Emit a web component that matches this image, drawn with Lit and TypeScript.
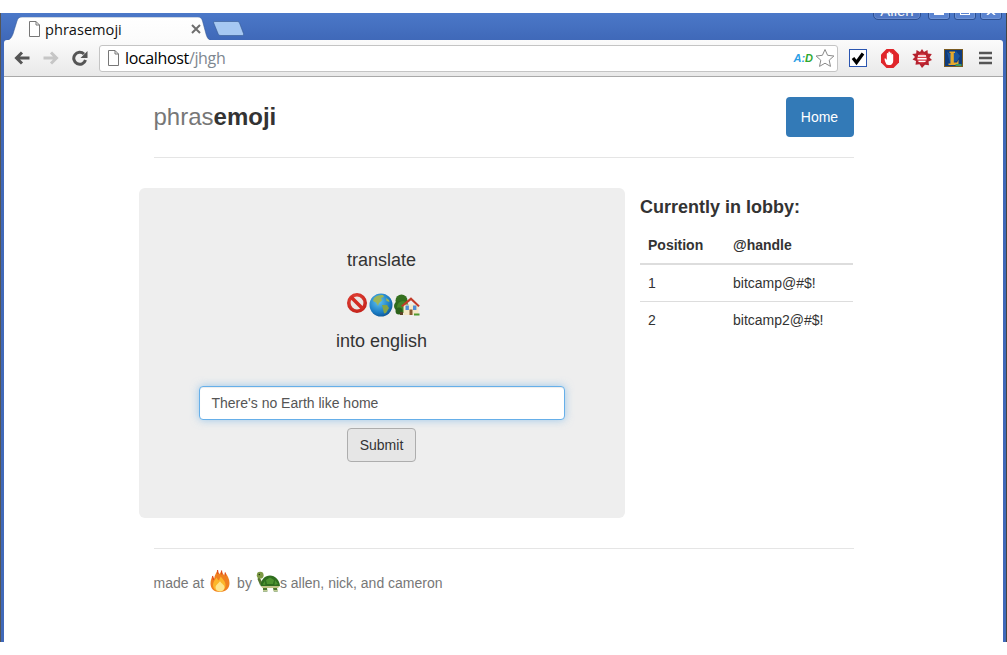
import { LitElement, html, css, svg } from "lit";
import { customElement } from "lit/decorators.js";

const pageIcon = svg`<path d="M1.500 .5h6.500l3.500 3.500v11.500h-10z" fill="#fff" stroke="#777"/><path d="M8 .5v3.500h3.500" fill="none" stroke="#777"/>`;

const noEntry = html`<svg class="emo noentry" width="22" height="22" viewBox="0 0 22 22"><defs><radialGradient id="ring" cx=".4" cy=".3" r=".8"><stop offset="0" stop-color="#e8473c"/><stop offset="1" stop-color="#c4231b"/></radialGradient></defs><circle cx="11" cy="11" r="8.200" fill="#e9e6e4" stroke="url(#ring)" stroke-width="3.600"/><path d="M5 5L17 17" stroke="#d22c22" stroke-width="3.600"/></svg>`;
const earth = html`<svg class="emo globe" width="24" height="24" viewBox="0 0 24 24"><defs><radialGradient id="sea" cx=".4" cy=".35" r=".75"><stop offset="0" stop-color="#62c4f0"/><stop offset=".65" stop-color="#1a7cc4"/><stop offset="1" stop-color="#0b4a88"/></radialGradient></defs><circle cx="12" cy="12" r="11.500" fill="url(#sea)"/><path d="M5 5c2-2.500 6-3.500 9-3l1 2-3 1 1 2.500-3 2.500-1 3-2-3.500-3-1.500z" fill="#9db657"/><path d="M13 12l5 0 2 3-3 5-2 .5-1-4.500z" fill="#86a446"/><path d="M17 5l3 2 .5 2-3-1z" fill="#9db657"/></svg>`;
const house = html`<svg class="emo house" width="26" height="22" viewBox="0 0 26 22"><circle cx="7.500" cy="6.500" r="6" fill="#34701f"/><circle cx="5" cy="12" r="5" fill="#2f6a1d"/><circle cx="9" cy="13" r="6" fill="#468529"/><circle cx="5" cy="17" r="3.500" fill="#2c621b"/><rect x="6" y="18" width="3" height="3" fill="#5e4226"/><path d="M9.500 21V10.500h15V21z" fill="#f5e8c8"/><path d="M7 11.800L17 3.300l8.800 8.500-1.500 1.200L17 6.300l-8.500 6.700z" fill="#c23a28"/><rect x="11.500" y="11.500" width="3.400" height="4.500" fill="#4f8fd8"/><rect x="19" y="11.500" width="3.400" height="4.500" fill="#4f8fd8"/><rect x="15.500" y="15.500" width="3" height="5.500" fill="#8a5a30"/><path d="M20 21.500h5.500v-2H20z" fill="#4f9a30"/></svg>`;
const fire = html`<svg class="foot-emo fire" width="20" height="22" viewBox="0 0 20 22"><path d="M10 22C4 22 .5 18.500 .5 13.500c0-3 1-5.500 2-7.500.5 1.200 1 2 1.700 2.500C4.600 5 6.500 2.500 7.500 0c.4 2 1.200 3 2 4 .8-1 1.500-2.200 2-3.500.6 2 1.600 3.500 2.800 5 .5-1 .8-2 1-3 2 2.500 4.200 6.500 4.200 10.500 0 5.500-3.500 9-9.500 9z" fill="#f0801f"/><path d="M2.500 6l1 4M7.500 0l.5 4M11.500 .5l.3 4M15.300 2.500l-.2 3" stroke="#e04a1c" stroke-width="1.200" fill="none"/><path d="M10 21.500c-4.500 0-7-3-7-6.500 0-3 2-5 3.500-7.500.8 1.500 1.500 2.500 2.500 3 .5-1.500 1-2.800 1.800-4 1 2 4.700 4.500 4.700 8.500 0 4-2.500 6.500-5.500 6.500z" fill="#fcb62a"/><path d="M10 21.500c-2.800 0-4.500-2-4.500-4.200 0-2 2.500-3.500 4.500-6 1.500 2.500 4.500 3.500 4.500 6 0 2.500-2 4.200-4.500 4.200z" fill="#fee58c"/></svg>`;
const turtle = html`<svg class="foot-emo turtle" width="24" height="21" viewBox="0 0 24 21"><path d="M3 5l4 8-3 1-2.500-6z" fill="#55752f"/><circle cx="4.200" cy="4.200" r="3.400" fill="#7d9a45"/><circle cx="3.300" cy="3.500" r=".7" fill="#1d2a10"/><path d="M4.500 15c.5-6.500 4.500-10.500 9.500-10.500S23.500 9 24 15z" fill="#2f6e1e"/><path d="M10 9l4-2.500L18 9l-1 4h-6zM19 9l3 4-3.500 1zM9 10l-2.500 3.500 2.800.5z" fill="#4e9430"/><path d="M4.500 15H24l-2 2H6.500z" fill="#bfc386"/><path d="M7 17h4l.5 3.500H7zM17 17h4l.8 3.500h-4z" fill="#4c7a2b"/><path d="M7 19.500h4.500M17.500 19.500h4.300" stroke="#e0e0b0" stroke-width=".8"/></svg>`;

@customElement("app-root")
export class AppRoot extends LitElement {
  static styles = css`
    :host { display: block; height: 655px; overflow: hidden; background: #fff; font-family: "Liberation Sans", Arial, sans-serif; color: #333; }
    * { box-sizing: border-box; }
    .blank { height: 13px; background: #fff; }
    .window { height: 629px; background: linear-gradient(#4b78c8, #3f68b8 28px, #4069b9); padding: 0 3px; display: flex; flex-direction: column; border-left: 1px solid #555; border-right: 1px solid #444; }
    .tabstrip { height: 27px; flex: none; position: relative; display: flex; align-items: flex-end; }
    .tabs { display: flex; align-items: flex-end; }
    .tab { width: 209px; height: 23px; position: relative; display: flex; align-items: center; }
    .tab svg.shape { position: absolute; left: 0; top: 0; }
    .tab .fav { position: relative; margin-left: 24px; flex: none; }
    .tab .title { position: relative; margin-left: 5px; font: 14.600px "Open Sans", "Noto Sans", sans-serif; color: #111; flex: 1; }
    .tab .x { position: relative; margin-right: 12px; display: block; flex: none; }
    .newtab { margin-bottom: 4px; display: block; }
    .controls { position: absolute; right: 0; top: 0; height: 7px; display: flex; padding-right: 1px; overflow: hidden; align-items: flex-end; }
    .ctrl { height: 19px; flex: none; border: 1px solid #2c4f92; border-radius: 0 0 3px 3px; background: #5b84d0; box-shadow: inset 0 0 0 1px rgba(255,255,255,.12); display: flex; align-items: flex-end; justify-content: center; }
    .ctrl svg { display: block; margin-bottom: 4px; }
    .ctrl.user { width: 48px; border-radius: 0 0 5px 5px; color: #f2f2f2; font: 15px/15px "Liberation Sans", sans-serif; padding-bottom: 1px; margin-right: 7px; background: #5077c4; }
    .ctrl.box { width: 22px; margin-right: 4px; }
    .ctrl.box:last-child { margin-right: 0; }
    .toolbar { height: 37px; flex: none; background: linear-gradient(#fbfbfb, #e9e9e9); border-bottom: 1px solid #a9a9a9; border-radius: 3px 3px 0 0; display: flex; align-items: center; }
    .navs { display: flex; align-items: center; width: 95px; flex: none; }
    .navs svg { display: block; flex: none; }
    .back { margin-left: 10px; }
    .fwd { margin-left: 13px; }
    .reload { margin-left: 13px; }
    .omni { width: 739px; height: 27px; flex: none; background: #fff; border: 1px solid #c4c4c4; border-radius: 3px; display: flex; align-items: center; padding-left: 7px; }
    .url { margin-left: 6px; flex: 1; font: 16px "Open Sans", "Noto Sans", sans-serif; color: #000; letter-spacing: -.35px; }
    .url span { color: #7e8790; }
    .aid { font: italic bold 11px "Liberation Sans", sans-serif; color: #2b9fe6; }
    .aid b { color: #2fa82f; }
    .star { margin: 0 2px 0 2px; }
    .exts { display: flex; align-items: center; margin-left: 11px; }
    .exts svg { display: block; flex: none; }
    .e2 { margin-left: 14px; }
    .e3 { margin-left: 13px; }
    .e4 { margin-left: 12px; }
    .e5 { margin-left: 16px; }
    .content { flex: 1; background: #fff; min-height: 0; }
    .container { width: 700px; margin-left: 149.500px; }
    .header { height: 81px; border-bottom: 1px solid #e5e5e5; display: flex; align-items: flex-start; justify-content: space-between; padding-top: 20px; }
    .brand { font-size: 24px; line-height: 40px; color: #777; margin: 0; font-weight: 400; }
    .brand b { color: #333; }
    .home { width: 68px; height: 40px; border-radius: 4px; background: #337ab7; color: #fff; font-size: 14px; display: flex; align-items: center; justify-content: center; }
    .row { display: flex; margin: 30px 0 0 -15px; width: 715.500px; gap: 15.500px; }
    .jumbo { width: 486px; height: 330px; background: #eee; border-radius: 6px; display: flex; flex-direction: column; align-items: center; padding-top: 60px; font-size: 18px; color: #333; }
    .jumbo p { margin: 0; line-height: 24px; }
    .emojis { display: flex; align-items: flex-start; height: 24px; margin: 21px 0 0 2px; }
    .emo { display: block; flex: none; }
    .noentry { margin-top: -1px; }
    .globe { margin-left: 1px; }
    .house { margin: 1px 0 0 1px; }
    .into { margin-top: 12px !important; }
    .field { width: 366px; height: 34px; margin-top: 33px; border: 1px solid #66afe9; border-radius: 4px; background: #fff; box-shadow: inset 0 1px 1px rgba(0,0,0,.075), 0 0 8px rgba(102,175,233,.6); font-size: 14px; color: #555; padding: 0 12px; display: flex; align-items: center; }
    .submit { margin-top: 8px; width: 69px; height: 34px; border: 1px solid #adadad; border-radius: 4px; background: #e6e6e6; font-size: 14px; color: #333; display: flex; align-items: center; justify-content: center; }
    .side { width: 214px; }
    .side h4 { font-size: 18px; font-weight: 700; line-height: 20px; margin: 9px 0 10px; color: #333; }
    table { border-collapse: collapse; width: 213px; font-size: 14px; line-height: 20px; }
    th { text-align: left; padding: 8px; border-bottom: 2px solid #ddd; font-weight: 700; }
    td { padding: 8px; border-top: 1px solid #ddd; }
    th:first-child, td:first-child { width: 85px; }
    .footer { margin-top: 30px; border-top: 1px solid #e5e5e5; height: 70px; display: flex; align-items: center; font-size: 14px; color: #777; white-space: pre; padding-bottom: 2px; }
    .foot-emo { display: block; flex: none; }
    .fire { margin: 0 7px 4px 6px; }
    .turtle { margin: 0 0 2px 4px; }
  `;

  render() {
    return html`
      <div class="blank"></div>
      <div class="window">
        <div class="tabstrip">
          <div class="tabs">
            <div class="tab">
              <svg class="shape" width="209" height="23" viewBox="0 0 209 23"><defs><linearGradient id="tabg" x1="0" x2="0" y1="0" y2="1"><stop offset="0" stop-color="#fff"/><stop offset="1" stop-color="#fbfbfb"/></linearGradient></defs><path d="M-1 24c6 0 8-2 10-7l4-13c1-3 2-4 5-4h176c2.500 0 3.500 1 4.500 4l3.500 13c1 4 3 7 8 7z" fill="url(#tabg)" stroke="#2f538f" stroke-width=".5"/></svg>
              <svg class="fav" width="12" height="16" viewBox="0 0 12 16">${pageIcon}</svg>
              <span class="title">phrasemoji</span>
              <svg class="x" width="10" height="10" viewBox="0 0 10 10"><path d="M1 1l8 8M9 1l-8 8" stroke="#6e6e6e" stroke-width="2"/></svg>
            </div>
            <svg class="newtab" width="31" height="15" viewBox="0 0 31 15"><path d="M2 .5h22c1.500 0 2 .5 2.500 1.500l4 10.500c.4 1.500-.2 2-1.500 2H8c-1.500 0-2.500-.5-3-2L.7 2C.4 1 1 .5 2 .5z" fill="#a6c8f2" stroke="#34578f" stroke-width=".6"/></svg>
          </div>
          <div class="controls">
            <div class="ctrl user">Allen</div>
            <div class="ctrl box"><svg width="10" height="3" viewBox="0 0 10 3"><rect width="10" height="3" fill="#fff"/></svg></div>
            <div class="ctrl box"><svg width="10" height="5" viewBox="0 0 10 5"><rect x=".5" y=".5" width="9" height="4" fill="none" stroke="#fff"/></svg></div>
            <div class="ctrl box"><svg width="10" height="7" viewBox="0 0 10 7"><path d="M1 0l8 7M9 0L1 7" stroke="#fff" stroke-width="1.600"/></svg></div>
          </div>
        </div>
        <div class="toolbar">
          <div class="navs">
            <svg class="back" width="16" height="14" viewBox="0 0 16 14"><path d="M15.500 7H3M8 1.500L2.500 7 8 12.500" fill="none" stroke="#555" stroke-width="3"/></svg>
            <svg class="fwd" width="16" height="14" viewBox="0 0 16 14"><path d="M.5 7H13M8 1.500L13.500 7 8 12.500" fill="none" stroke="#c6c6c6" stroke-width="3"/></svg>
            <svg class="reload" width="16" height="16" viewBox="0 0 16 16"><path d="M13.500 10A6 6 0 1 1 12 4" fill="none" stroke="#555" stroke-width="3"/><path d="M15.500 1v7h-7z" fill="#555"/></svg>
          </div>
          <div class="omni">
            <svg width="12" height="16" viewBox="0 0 12 16">${pageIcon}</svg>
            <div class="url">localhost<span>/jhgh</span></div>
            <span class="aid">A:<b>D</b></span>
            <svg class="star" width="20" height="20" viewBox="0 0 20 20"><path d="M10 1.500l2.600 5.800 6.300.7-4.700 4.200 1.300 6.200-5.500-3.200-5.500 3.200 1.300-6.200L1.100 8l6.300-.7z" fill="#fff" stroke="#8a8a8a"/></svg>
          </div>
          <div class="exts">
            <svg width="18" height="18" viewBox="0 0 18 18"><rect x=".5" y=".5" width="17" height="17" fill="#fff" stroke="#2a55b0"/><path d="M4 9l3.500 4.500L14 4.500" fill="none" stroke="#000" stroke-width="3.200"/></svg>
            <svg class="e2" width="18" height="19" viewBox="0 0 18 19"><path d="M5.500 0h7L18 5.500v8L12.500 19h-7L0 13.500v-8z" fill="#e0262b"/><path d="M5.500 15.500C4.500 13.500 3.500 11.500 3.500 9.500c1.200-.3 1.800.5 2.300 1.500V5c0-1.200 1.500-1.200 1.500 0V3.500c0-1.200 1.700-1.200 1.700 0V4.500c0-1.200 1.600-1.200 1.600 0V6c0-1.200 1.600-1.200 1.600 0v6c0 2-1.200 3.500-2.700 4H7.500c-1 0-1.600-.2-2-.5z" fill="#fff"/></svg>
            <svg class="e3" width="20" height="19" viewBox="0 0 20 19"><path d="M10 0l2 3L15.500 1l.3 3.600 4 .4-2.300 3.500 2.500 2.500-3.500 1.500.5 3.700-4-.5L10 19l-2.500-3.800-4 .5.500-3.700L.5 10.500 3 8 .2 5l4-.4.3-3.600L8 3z" fill="#b5222e"/><circle cx="10" cy="9.500" r="5" fill="#d9404c"/><path d="M6 7h8M5.500 9.700h9M6.500 12.400h7" stroke="#fff" stroke-width="1.400"/></svg>
            <svg class="e4" width="19" height="18" viewBox="0 0 19 18"><rect width="19" height="18" fill="#0f3b7c"/><path d="M3 3l5 3 4-4 4 5-3 5-7 2z" fill="#1a56a0"/><rect x=".5" y=".5" width="18" height="17" fill="none" stroke="#7a5b20"/><path d="M5.500 2.500H11V4H9.800v9.500H13l1.500-3v5.500H4.500V14.500h2V4h-1z" fill="#e6a92c"/><rect x="11.500" y="15" width="6" height="2" fill="#3c9a60"/></svg>
            <svg class="e5" width="13" height="14" viewBox="0 0 13 14"><path d="M0 2h13M0 7h13M0 12h13" stroke="#555" stroke-width="2.400"/></svg>
          </div>
        </div>
        <div class="content">
          <div class="container">
            <div class="header">
              <h3 class="brand">phras<b>emoji</b></h3>
              <div class="home">Home</div>
            </div>
            <div class="row">
              <div class="jumbo">
                <p>translate</p>
                <div class="emojis">${noEntry}${earth}${house}</div>
                <p class="into">into english</p>
                <div class="field">There's no Earth like home</div>
                <div class="submit">Submit</div>
              </div>
              <div class="side">
                <h4>Currently in lobby:</h4>
                <table>
                  <thead><tr><th>Position</th><th>@handle</th></tr></thead>
                  <tbody>
                    <tr><td>1</td><td>bitcamp@#$!</td></tr>
                    <tr><td>2</td><td>bitcamp2@#$!</td></tr>
                  </tbody>
                </table>
              </div>
            </div>
            <div class="footer"><span>made at</span>${fire}<span>by</span>${turtle}<span>s allen, nick, and cameron</span></div>
          </div>
        </div>
      </div>
    `;
  }
}
